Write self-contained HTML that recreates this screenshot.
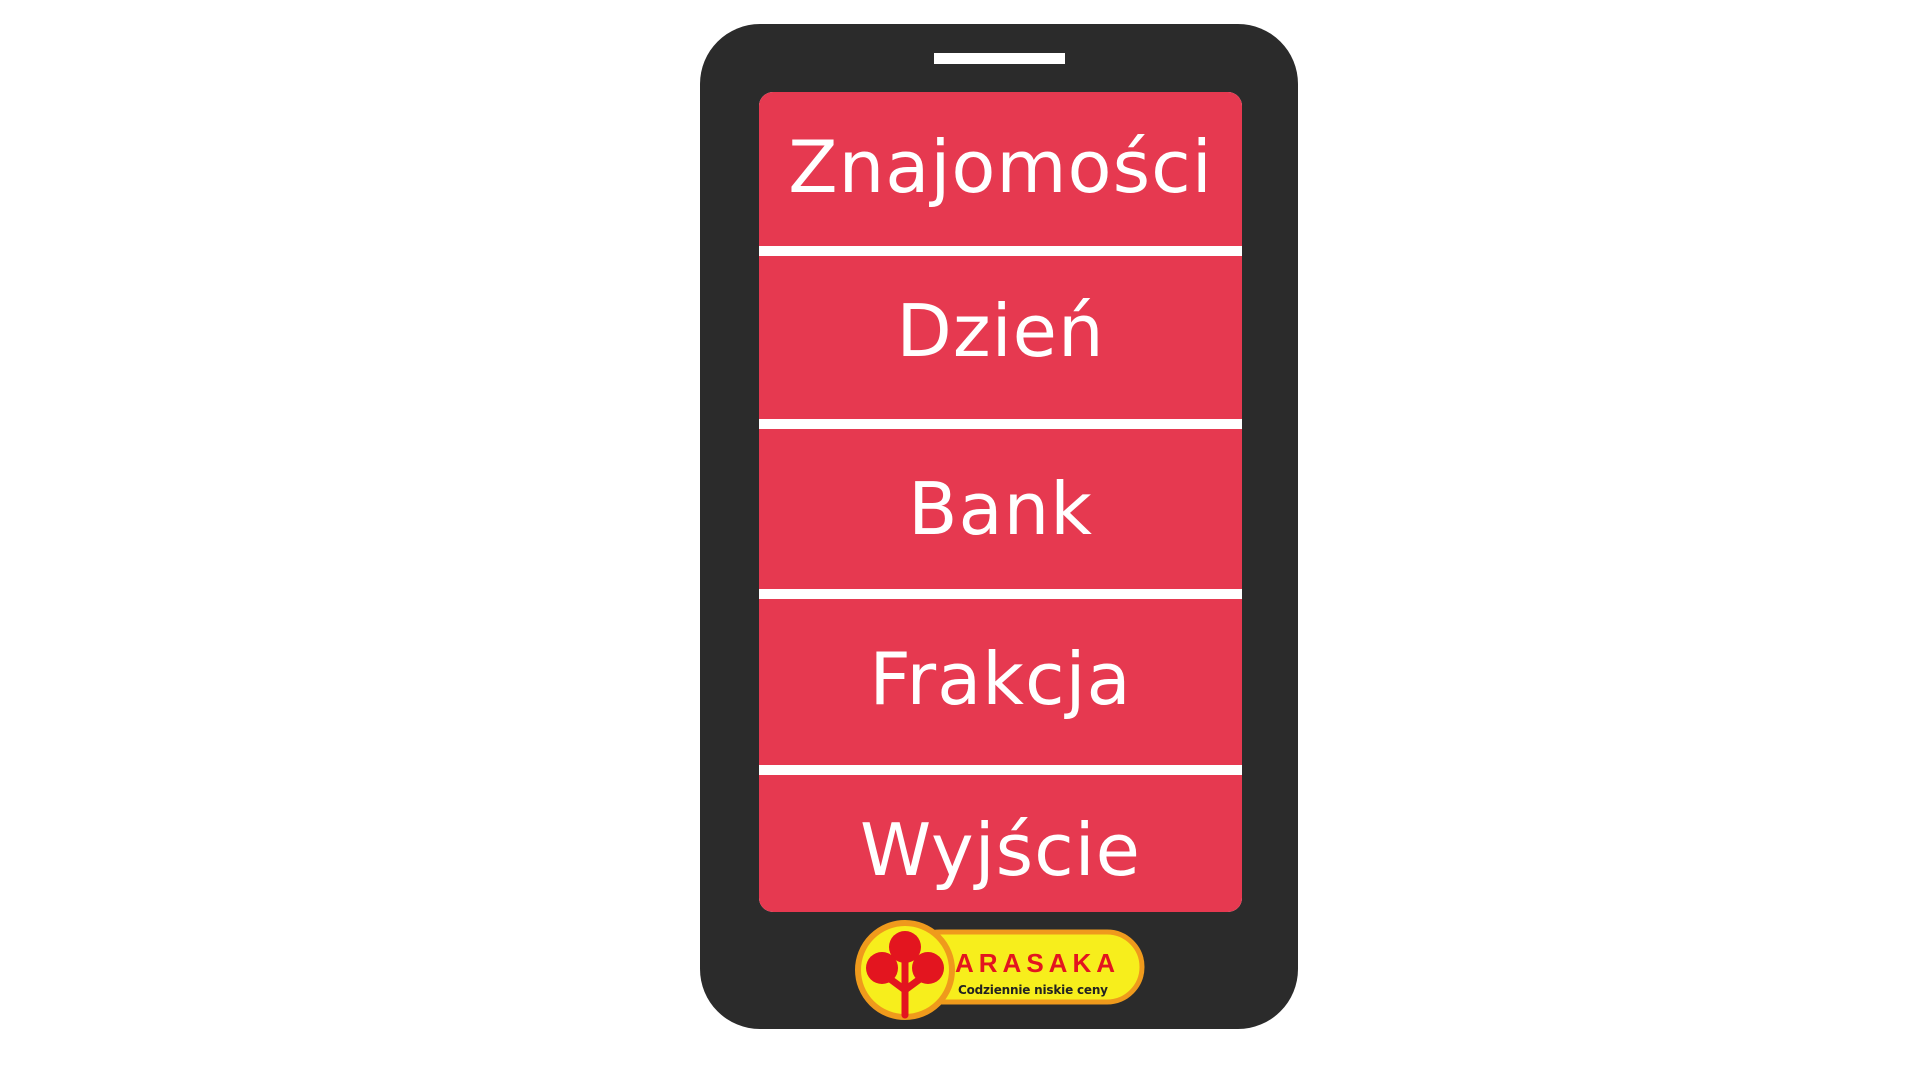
<!DOCTYPE html>
<html><head><meta charset="utf-8"><style>
body{margin:0;width:1920px;height:1080px;background:#fff;position:relative;overflow:hidden;font-family:"Liberation Sans",sans-serif}
.phone{position:absolute;left:700px;top:24px;width:598px;height:1005px;background:#2b2b2b;border-radius:60px}
.spk{position:absolute;left:934px;top:53px;width:131px;height:11px;background:#fff}
.screen{position:absolute;left:759px;top:92px;width:483px;height:820px;background:#fff;border-radius:14px;overflow:hidden}
.row{position:absolute;left:0;width:483px;background:#e63950;color:#fff;text-align:center;font-family:"DejaVu Sans",sans-serif;font-size:72px;letter-spacing:1px}
</style></head><body>
<div class="phone"></div>
<div class="spk"></div>
<div class="screen">
<div class="row" style="top:0;height:154px;line-height:150px">Znajomości</div>
<div class="row" style="top:164px;height:163px;line-height:150px">Dzień</div>
<div class="row" style="top:337px;height:160px;line-height:160px">Bank</div>
<div class="row" style="top:507px;height:166px;line-height:160px">Frakcja</div>
<div class="row" style="top:683px;height:137px;line-height:150px">Wyjście</div>
</div>
<svg style="position:absolute;left:850px;top:915px" width="300" height="110">
<rect x="55" y="17" width="237" height="70" rx="35" fill="#f7ee1c" stroke="#ef9a1c" stroke-width="5"/>
<circle cx="55" cy="55" r="47" fill="#f7ee1c" stroke="#ef9a1c" stroke-width="6"/>
<path d="M55 100 V45 M55 75 L32 58 M55 75 L78 58" stroke="#e3151f" stroke-width="7" fill="none" stroke-linecap="round"/>
<circle cx="55" cy="32" r="16" fill="#e3151f"/>
<circle cx="32" cy="53" r="16" fill="#e3151f"/>
<circle cx="78" cy="53" r="16" fill="#e3151f"/>
<text x="105" y="57" font-family="Liberation Sans" font-weight="bold" font-size="26" fill="#e3151f" textLength="160">ARASAKA</text>
<text x="108" y="79" font-family="DejaVu Sans" font-weight="bold" font-size="12" fill="#222" textLength="150">Codziennie niskie ceny</text>
</svg>
</body></html>
